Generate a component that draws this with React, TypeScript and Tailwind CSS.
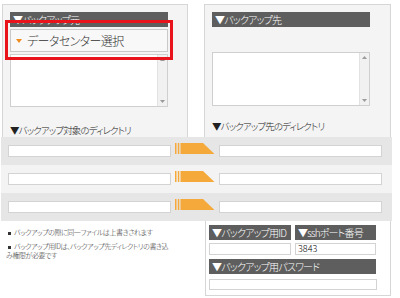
import React from 'react';

const Bar = ({ label, className = '' }: { label: string; className?: string }) => (
  <div className={`bg-[#5e5e5e] text-white text-[10px] font-light tracking-[-0.8px] leading-[15px] h-[15px] pl-[3px] whitespace-nowrap overflow-hidden ${className}`}>
    {label}
  </div>
);

const ListBox = ({ className = '' }: { className?: string }) => (
  <div className={`w-[158px] bg-white border border-[#cfcfcf] flex justify-end ${className}`}>
    <div className="w-[10px] h-full bg-[#f1f1f1] border-l border-[#e2e2e2] flex flex-col items-center justify-between py-[3px]">
      <svg width="5" height="3" viewBox="0 0 5 3"><polygon points="2.5,0 5,3 0,3" fill="#9a9a9a" /></svg>
      <svg width="5" height="3" viewBox="0 0 5 3"><polygon points="0,0 5,0 2.5,3" fill="#9a9a9a" /></svg>
    </div>
  </div>
);

const Field = ({ className = '', value = '' }: { className?: string; value?: string }) => (
  <div className={`bg-white border border-[#d3d3d3] text-[9px] font-light leading-[10px] text-black pl-[2px] ${className}`}>{value}</div>
);

const Arrow = () => (
  <svg width="40" height="11" viewBox="0 0 40 11" className="mt-[6px] ml-[4px] shrink-0">
    <rect x="0" y="0" width="1.5" height="11" fill="#f5a93a" />
    <rect x="2.8" y="0" width="1.5" height="11" fill="#f5a93a" />
    <polygon points="5.5,0 28,0 39.5,11 5.5,11" fill="#f5a93a" />
  </svg>
);

const rows = ['bg-[#e6e6e6]', 'bg-[#f3f3f3]', 'bg-[#e6e6e6]'];

const Dot = () => <span className="inline-block w-[3px] h-[3px] bg-[#333] mr-[3px] align-middle" />;

export default function App() {
  return (
    <div
      className="w-[400px] h-[298px] bg-white overflow-hidden relative [font-feature-settings:'palt']"
      style={{ fontFamily: '"Noto Sans CJK JP", "Noto Sans", sans-serif' }}
    >
      {/* source / destination panels */}
      <div className="flex pt-[4px] pl-[2px] gap-[16px]">
        <div className="w-[186px] h-[133px] border border-b-0 border-[#d6d6d6] bg-[#f4f4f4] pt-[7px] pl-[7px] flex flex-col">
          <Bar label="▼バックアップ元" className="w-[158px]" />
          <div className="mt-[2px] h-[23px] w-[158px] bg-[#f8f8f8] border border-[#c9c9c9] flex items-center pl-[5px]">
            <svg width="6" height="4" viewBox="0 0 6 4" className="mr-[5px]"><polygon points="0,0 6,0 3,4" fill="#f08c1e" /></svg>
            <span className="text-[12px] font-light tracking-[-0.6px] leading-none text-[#333]">データセンター選択</span>
          </div>
          <ListBox className="mt-[2px] h-[53px]" />
          <div className="mt-[17px] text-[9.5px] font-light tracking-[-0.9px] leading-[12px] text-[#222] whitespace-nowrap">▼バックアップ対象のディレクトリ</div>
        </div>
        <div className="w-[187px] h-[133px] border border-b-0 border-[#d6d6d6] bg-[#f4f4f4] pt-[7px] pl-[7px] flex flex-col">
          <Bar label="▼バックアップ先" className="w-[158px]" />
          <ListBox className="mt-[25px] h-[54px]" />
          <div className="mt-[14px] text-[9.5px] font-light tracking-[-0.9px] leading-[12px] text-[#222] whitespace-nowrap">▼バックアップ先のディレクトリ</div>
        </div>
      </div>

      {/* directory mapping band */}
      <div className="ml-[1px] w-[391px]">
        {rows.map((bg, i) => (
          <div key={i} className={`${bg} h-[28px] flex items-start pl-[7px]`}>
            <Field className="mt-[8px] w-[163px] h-[12px]" />
            <Arrow />
            <Field className="mt-[8px] ml-[4px] w-[163px] h-[12px]" />
          </div>
        ))}
      </div>

      {/* notes and credentials */}
      <div className="flex">
        <div className="w-[205px] pt-[7px] pl-[6px] text-[7px] font-light tracking-[-0.45px] leading-[9px] text-[#333]">
          <div className="whitespace-nowrap pl-[2px]">
            <Dot />
            バックアップの際に同一ファイルは上書きされます
          </div>
          <div className="mt-[5px] whitespace-nowrap">
            <span className="pl-[2px]">
              <Dot />
              バックアップ用IDは、バックアップ先ディレクトリの書き込
            </span>
            <br />
            み権限が必要です
          </div>
        </div>
        <div className="w-[186px] h-[75px] border border-t-0 border-[#d6d6d6] pt-[4px] pl-[3px]">
          <div className="flex gap-[4px]">
            <div className="flex flex-col">
              <Bar label="▼バックアップ用ID" className="w-[82px]" />
              <Field className="mt-[3px] w-[82px] h-[12px]" />
            </div>
            <div className="flex flex-col">
              <Bar label="▼sshポート番号" className="w-[81px]" />
              <Field className="mt-[3px] w-[81px] h-[12px]" value="3843" />
            </div>
          </div>
          <Bar label="▼バックアップ用パスワード" className="mt-[4px] w-[167px] h-[14px] leading-[14px]" />
          <Field className="mt-[5px] w-[168px] h-[11px]" />
        </div>
      </div>

      {/* highlight annotation */}
      <div className="absolute left-[5px] top-[20px] w-[168px] h-[40px] border-[3px] border-[#e8131b]" />
    </div>
  );
}
